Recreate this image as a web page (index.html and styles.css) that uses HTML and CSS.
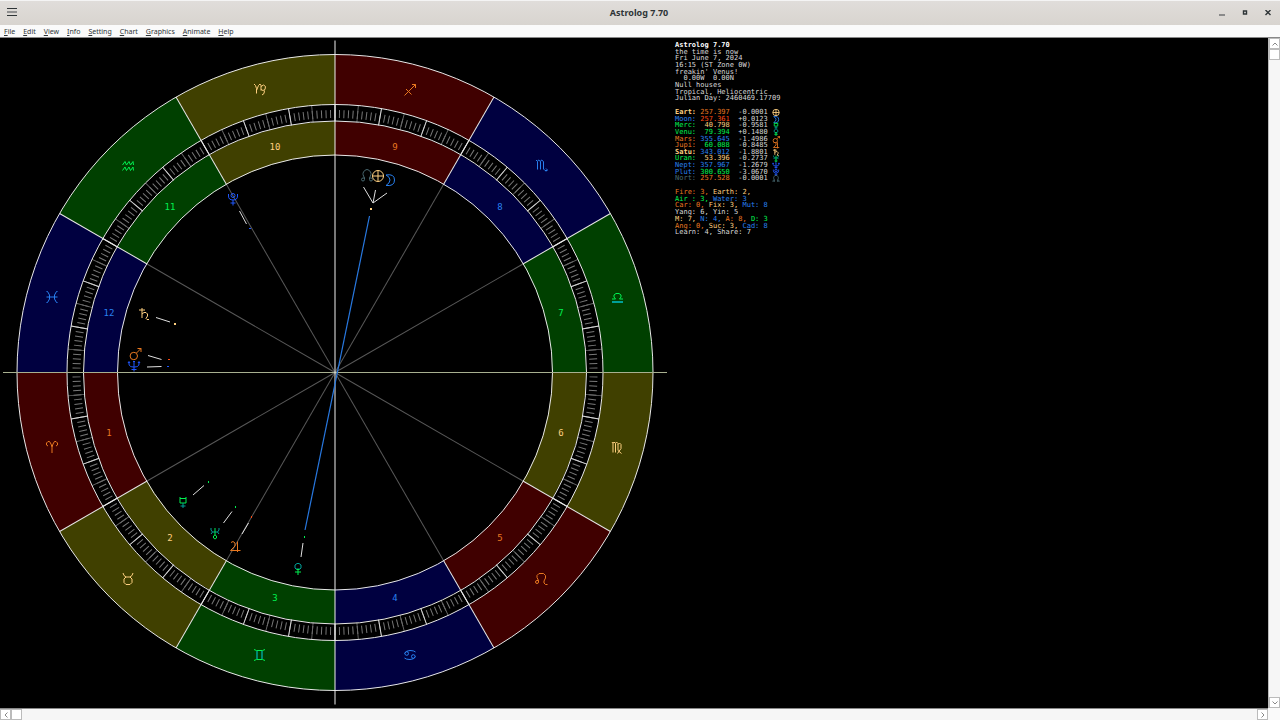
FILE: index.html
```
<!DOCTYPE html>
<html lang="en">
<head>
    <meta charset="utf-8">
    <title>Astrolog 7.70</title>
    <link rel="stylesheet" href="styles.css">
</head>
<body>
    <!-- Title bar -->
    <header class="titlebar">
        <button type="button" class="icon-button" aria-label="Window menu">
            <svg width="10" height="10" viewBox="0 0 10 10"><path d="M0 .5h10M0 7.500h10" stroke="#2e3436"/><path d="M0 4h10" stroke="#909090" stroke-width="2"/></svg>
        </button>
        <h1>Astrolog 7.70</h1>
        <div class="window-controls">
            <button type="button" class="icon-button" aria-label="Minimize">
                <svg width="6" height="6" viewBox="0 0 6 6"><path d="M0 5h6" stroke="#8a8a8a" stroke-width="2"/></svg>
            </button>
            <button type="button" class="icon-button" aria-label="Maximize">
                <svg width="6" height="6" viewBox="0 0 6 6"><path d="M1.5 1h3v3h-3z" fill="#ddd" stroke="#2e3436" stroke-width="1.4"/></svg>
            </button>
            <button type="button" class="icon-button" aria-label="Close">
                <svg width="6" height="6" viewBox="0 0 6 6"><path d="M.5 0l5 5M5.5 0l-5 5" stroke="#2e3436" stroke-width="1.4"/></svg>
            </button>
        </div>
    </header>

    <nav class="menubar">
        <button type="button"><u>F</u>ile</button>
        <button type="button"><u>E</u>dit</button>
        <button type="button"><u>V</u>iew</button>
        <button type="button"><u>I</u>nfo</button>
        <button type="button"><u>S</u>etting</button>
        <button type="button"><u>C</u>hart</button>
        <button type="button"><u>G</u>raphics</button>
        <button type="button"><u>A</u>nimate</button>
        <button type="button"><u>H</u>elp</button>
    </nav>

    <div class="workspace">
        <main class="canvas">
            <svg class="wheel" viewBox="0 38 670 670" role="img" aria-label="Chart wheel">
                <defs>
                    <path id="sector" d="M268 0H318A318 318 0 0 1 275.4 159L232.1 134A268 268 0 0 0 268 0ZM217 0H251A251 251 0 0 1 217.4 125.5L187.9 108.5A217 217 0 0 0 217 0Z"/>
                    <g id="cusp">
                        <path class="spoke" d="M0 0H217"/>
                        <path class="edge" d="M217 0H318"/>
                    </g>
                    <!-- Planet glyphs, also used in the table -->
                    <path id="earth" d="M5.5 0A5.5 5.5 0 1 1-5.5 0A5.5 5.5 0 1 1 5.5 0M-5.5 0H5.5M0-5.5V5.5"/>
                    <path id="moon" d="M-4-5Q4.500-6.500 4.500 0T-4 5.500Q0 3 0 0T-4-5Z"/>
                    <path id="node" d="M-2.5 4.5a1.5 1.5 0 1 1-1.5-1.5h1.5C-4 0-4.5-1-3.5-3Q-2-5.500 0-5.500T3.500-3C4.500-1 4 0 2.500 3H4a1.5 1.5 0 1 1-1.5 1.5V3M-2.500 3V4.500"/>
                    <g id="mercury"><path d="M-3-5v1.500h6V-5M-3-3.500V1H3v-4.500"/><path class="teal" d="M0 1v5M-2.500 4H2.500"/></g>
                    <g id="venus"><path class="teal" d="M-2 0L-3-1V-4L-1-5.500H1L3-4V-1L2 0Z"/><path d="M-1.500 .5h3M0 .5V6M-3 3H3"/></g>
                    <path id="mars" d="M2.500 2A3.700 3.700 0 1 1-4.900 2A3.700 3.700 0 1 1 2.500 2M1.500-1L6-5.500M2.500-5.500H6V-2"/>
                    <path id="jupiter" d="M-4-4.500L-2-5.500L0-4V-1L-4.500 3.500H5.500M2.500-5.500V5"/>
                    <path id="saturn" d="M-5-4H1M-2-6V4M-2 0L0-1.500H2L3.500 0V2L2 4.500L3 5.500H5"/>
                    <g id="uranus"><path class="teal" d="M-4-5V-3L-2.500-1L-4 1M4-5V-3L2.500-1L4 1M-2.500-1H2.500"/><path d="M0-5V2L-1.500 3V5L0 6L1.500 5V3L0 2"/></g>
                    <path id="neptune" d="M-5-4V-2Q-5 1 0 1T5-2V-4M0-5V5.500M-2.500 3.500H2.500M-6-3L-5-4.500L-4-3M4-3L5-4.500L6-3M-1-4L0-5L1-4"/>
                    <path id="pluto" d="M-4.500-5V-3Q-4.500 1 0 1T4.500-3V-5M2-3.500A2 2 0 1 1-2-3.500A2 2 0 1 1 2-3.500M0 1V6.500M-2.500 4H2.500"/>
                </defs>

                <g transform="translate(335 372.5)">
                    <use href="#sector" class="sector-earth"/>
                    <use href="#sector" class="sector-fire" transform="rotate(30)"/>
                    <use href="#sector" class="sector-water" transform="rotate(60)"/>
                    <use href="#sector" class="sector-air" transform="rotate(90)"/>
                    <use href="#sector" class="sector-earth" transform="rotate(120)"/>
                    <use href="#sector" class="sector-fire" transform="rotate(150)"/>
                    <use href="#sector" class="sector-water" transform="rotate(180)"/>
                    <use href="#sector" class="sector-air" transform="rotate(210)"/>
                    <use href="#sector" class="sector-earth" transform="rotate(240)"/>
                    <use href="#sector" class="sector-fire" transform="rotate(270)"/>
                    <use href="#sector" class="sector-water" transform="rotate(300)"/>
                    <use href="#sector" class="sector-air" transform="rotate(330)"/>

                    <!-- Degree ring: every 1, 5 and 10 degrees -->
                    <circle class="ticks-1" r="258.5" pathLength="360"/>
                    <circle class="ticks-5" r="259.5" pathLength="72"/>
                    <circle class="ticks-10" r="259.5" pathLength="36"/>

                    <use href="#cusp" transform="rotate(30)"/>
                    <use href="#cusp" transform="rotate(60)"/>
                    <use href="#cusp" transform="rotate(120)"/>
                    <use href="#cusp" transform="rotate(150)"/>
                    <use href="#cusp" transform="rotate(210)"/>
                    <use href="#cusp" transform="rotate(240)"/>
                    <use href="#cusp" transform="rotate(300)"/>
                    <use href="#cusp" transform="rotate(330)"/>

                    <circle class="edge" r="318"/>
                    <circle class="edge" r="268"/>
                    <circle class="edge" r="251.5"/>
                    <circle class="edge" r="217.5"/>
                    <path class="horizon" d="M-332 0H332"/>
                    <path class="meridian" d="M0-332V332"/>
                </g>

                <!-- House numbers -->
                <g class="houses">
                    <text class="fire" x="109" y="436">1</text>
                    <text class="earth" x="170" y="541">2</text>
                    <text class="air" x="275" y="601">3</text>
                    <text class="water" x="395" y="601">4</text>
                    <text class="fire" x="500" y="541">5</text>
                    <text class="earth" x="561" y="436">6</text>
                    <text class="air" x="561" y="316">7</text>
                    <text class="water" x="500" y="210">8</text>
                    <text class="fire" x="395" y="150">9</text>
                    <text class="earth" x="275" y="150">10</text>
                    <text class="air" x="170" y="210">11</text>
                    <text class="water" x="109" y="316">12</text>
                </g>

                <!-- Signs -->
                <g class="glyphs">
                    <path class="fire" transform="translate(52 447)" d="M-4-1L-5.500-2V-4L-4-5.500H-2.500L-1-3L0 0V6M0 0L1-3L2.500-5.500H4L5.500-4V-2L4-1"/>
                    <path class="earth" transform="translate(128 579)" d="M-5-6Q-4.500-3-2-2H2Q4.500-3 5-6M-2-2L-4 0V3.500L-2 5.500H2L4 3.500V0L2-2"/>
                    <g transform="translate(259.5 655)"><path class="teal" stroke-width="1.500" d="M-2.500-4V4M2.500-4V4"/><path class="air" d="M-5.500-5.500L-3-4.500H3L5.500-5.500M-5.500 5.500L-3 4.500H3L5.500 5.500"/></g>
                    <path class="water" transform="translate(410 655)" d="M-5.500-1.500Q-4-4.500 0-4.500T5.500-3M-1.500-1.500A1.800 1.800 0 1 1-5.100-1.500A1.800 1.800 0 1 1-1.500-1.500M5.100 1.500A1.800 1.800 0 1 1 1.500 1.500A1.800 1.800 0 1 1 5.100 1.500M5.500 1.500Q4 4.500 0 4.500T-5.500 3"/>
                    <path class="fire" transform="translate(541.5 579)" d="M-3 3A1.500 1.500 0 1 1-4.500 1.500H-3L-4.500-1.500V-3.500L-2.500-5.500H2L4-3.500V-1L2.500 2V4L4 5.500H6M-3 1.500V3"/>
                    <path class="earth" transform="translate(617 447.5)" d="M-5-5.500L-4-4V5M-4-4L-3-5.500L-1.500-4V5M-1.500-4L-.5-5.500L1-4V3L4.500 6M1-3L2.500-4.500L4-3V1L.5 6"/>
                    <g transform="translate(617.5 298)"><path class="air" d="M-5.500 1H-2L-3.500-1V-3L-1.500-4.500H1.500L3.500-3V-1L2 1H5.500"/><path class="teal" d="M-5.500 4H5.500" stroke-width="2"/></g>
                    <path class="water" transform="translate(541.5 165.5)" d="M-5.500-5.500L-4-4V4M-4-4L-3-5.500L-1-4V4M-1-4L0-5.500L2-4V3.500L3.500 5H5.500M4.500 3L6 4.500L4.500 6"/>
                    <path class="fire" transform="translate(410 90)" d="M-5.500 5.500L5.500-5.500M2-5.500H5.500V-2M-4-1L1.500 4.500"/>
                    <path class="earth" transform="translate(260 89.5)" d="M-6-5.500L-4.500-4L-3.500-1V4M-3.500 1L-1.500-4L0-5.500L1-4V1M1-3L3.500-4.500L5.500-3L5 0L3 1L1 0M4.500 1L4 4L2 5.500"/>
                    <g class="air" transform="translate(128 166)"><path d="M-5.500-1L-3-4.500L-1.500-1L1-4.500L2.500-1L5-4.500L5.500-1"/><path d="M-5.500 4.500L-3 1L-1.500 4.500L1 1L2.500 4.500L5 1L5.500 4.500"/></g>
                    <path class="water" transform="translate(52 297)" d="M-5.500-5.500H-4.500L-2.500-2V2L-4.500 5.500H-5.500M5.500-5.500H4.500L2.500-2V2L4.500 5.500H5.500M-5.500 0H5.500"/>
                </g>

                <!-- Aspect line -->
                <path class="aspect" d="M369.500 216L305 530"/>

                <!-- Planets -->
                <g class="glyphs">
                    <use href="#node" class="node" x="367" y="175"/>
                    <use href="#earth" class="earth" x="378" y="176"/>
                    <use href="#moon" class="water" x="390" y="180"/>
                    <use href="#pluto" class="pluto" x="233" y="199"/>
                    <use href="#saturn" class="earth" x="144" y="314"/>
                    <use href="#mars" class="fire" x="135" y="354"/>
                    <use href="#neptune" class="pluto" x="134" y="366"/>
                    <use href="#mercury" class="air" x="183" y="502"/>
                    <use href="#uranus" class="air" x="215" y="533"/>
                    <use href="#jupiter" class="fire" x="235" y="547"/>
                    <use href="#venus" class="air" x="298" y="569"/>
                </g>
                <path class="pointer" d="M363.5 187L373 203L375.500 190M373 203L387 193M239.500 211L246.500 224M156 317.500L170 322M148 355.500L161.500 359.500M147 367L161.500 366.500M193 495L204 485.500M223.500 523L232 511.500M242 534L248.500 523M301 557L303 543"/>
                <g class="dots">
                    <rect class="earth" x="370" y="208" width="2" height="2"/>
                    <rect class="pluto" x="249" y="228" width="2" height="1"/>
                    <rect class="earth" x="174" y="323" width="2" height="2"/>
                    <rect class="mars" x="168" y="359" width="2" height="1"/>
                    <rect class="pluto" x="167" y="366" width="2" height="1"/>
                    <rect class="air" x="208" y="481" width="1" height="2"/>
                    <rect class="air" x="235" y="506" width="1" height="2"/>
                    <rect class="mars" x="251" y="516" width="1" height="2"/>
                    <rect class="air" x="304" y="536" width="1" height="2"/>
                </g>
            </svg>

            <aside class="sidebar">
                <div class="lines chart-info">
                    <strong>Astrolog 7.70</strong>
                    <span>the time is now</span>
                    <span>Fri June 7, 2024</span>
                    <span>16:15 (ST Zone 0W)</span>
                    <span>freakin' Venus!</span>
                    <span>  0.00W  0.00N</span>
                    <span>Null houses</span>
                    <span>Tropical, Heliocentric</span>
                    <span>Julian Day: 2460469.17709</span>
                </div>

                <table class="positions">
                    <tbody>
                        <tr><th class="earth">Eart: </th><td class="fire">257.397</td><td>  -0.0001 </td><td><svg class="earth" viewBox="-6 -6 12 12"><use href="#earth"/></svg></td></tr>
                        <tr><th class="water">Moon: </th><td class="mars">257.361</td><td>  +0.0123 </td><td><svg class="water" viewBox="-6 -6 12 12"><use href="#moon"/></svg></td></tr>
                        <tr><th class="air">Merc: </th><td class="earth"> 40.798</td><td>  -0.9581 </td><td><svg class="air" viewBox="-6 -6 12 12"><use href="#mercury"/></svg></td></tr>
                        <tr><th class="air">Venu: </th><td class="air"> 79.394</td><td>  +0.1480 </td><td><svg class="air" viewBox="-6 -6 12 12"><use href="#venus"/></svg></td></tr>
                        <tr><th class="fire">Mars: </th><td class="water">355.645</td><td>  -1.4986 </td><td><svg class="fire" viewBox="-6 -6 12 12"><use href="#mars"/></svg></td></tr>
                        <tr><th class="fire">Jupi: </th><td class="air"> 60.088</td><td>  -0.8485 </td><td><svg class="fire" viewBox="-6 -6 12 12"><use href="#jupiter"/></svg></td></tr>
                        <tr><th class="earth">Satu: </th><td class="water">343.012</td><td>  -1.8801 </td><td><svg class="earth" viewBox="-6 -6 12 12"><use href="#saturn"/></svg></td></tr>
                        <tr><th class="air">Uran: </th><td class="earth"> 53.396</td><td>  -0.2737 </td><td><svg class="air" viewBox="-6 -6 12 12"><use href="#uranus"/></svg></td></tr>
                        <tr><th class="water">Nept: </th><td class="water">357.967</td><td>  -1.2679 </td><td><svg class="pluto" viewBox="-6 -6 12 12"><use href="#neptune"/></svg></td></tr>
                        <tr><th class="water">Plut: </th><td class="air">300.650</td><td>  -3.0670 </td><td><svg class="pluto" viewBox="-6 -6 12 12"><use href="#pluto"/></svg></td></tr>
                        <tr><th class="node">Nort: </th><td class="fire">257.528</td><td>  -0.0001 </td><td><svg class="node" viewBox="-6 -6 12 12"><use href="#node"/></svg></td></tr>
                    </tbody>
                </table>

                <div class="lines totals">
                    <span><span class="fire">Fire: 3,</span> <span class="earth">Earth: 2,</span></span>
                    <span><span class="air">Air : 3,</span> <span class="water">Water: 3</span></span>
                    <span><span class="fire">Car: 0,</span> <span class="earth">Fix: 3,</span> <span class="water">Mut: 8</span></span>
                    <span>Yang: 6, Yin: 5</span>
                    <span><span class="earth">M: 7,</span> <span class="water">N: 4,</span> <span class="fire">A: 8,</span> <span class="air">D: 3</span></span>
                    <span><span class="fire">Ang: 0,</span> <span class="earth">Suc: 3,</span> <span class="water">Cad: 8</span></span>
                    <span>Learn: 4, Share: 7</span>
                </div>
            </aside>
        </main>

        <!-- Scrollbars -->
        <div class="scrollbar vertical">
            <button type="button" aria-label="Scroll up"><svg width="6" height="4" viewBox="0 0 6 4"><path d="M.5 3.5L3 1L5.5 3.5"/></svg></button>
            <div class="thumb"></div>
            <button type="button" class="end" aria-label="Scroll down"><svg width="6" height="4" viewBox="0 0 6 4"><path d="M.5 .5L3 3L5.5 .5"/></svg></button>
        </div>
        <div class="scrollbar horizontal">
            <button type="button" aria-label="Scroll left"><svg width="4" height="6" viewBox="0 0 4 6"><path d="M3.5 .5L1 3L3.5 5.5"/></svg></button>
            <div class="thumb"></div>
            <button type="button" class="end" aria-label="Scroll right"><svg width="4" height="6" viewBox="0 0 4 6"><path d="M.5 .5L3 3L.5 5.5"/></svg></button>
        </div>
    </div>
</body>
</html>
```
FILE: styles.css
```
* {
    box-sizing: border-box;
}

body {
    margin: 0;
    height: 100vh;
    display: flex;
    flex-direction: column;
    overflow: hidden;
    background-color: #fafafa;
    font-family: "Noto Sans", sans-serif;
    color: #2e3436;
}

button {
    margin: 0;
    padding: 0;
    border: none;
    background: none;
    color: inherit;
    font: inherit;
}

svg {
    display: block;
}

/* Title bar */
.titlebar {
    display: grid;
    grid-template-columns: 1fr auto 1fr;
    align-items: center;
    height: 25px;
    padding: 0 9px 0 7px;
    border-top: 1px solid #f4f4f4;
    background: linear-gradient(#e0ddda, #d8d4cf);
}

.titlebar h1 {
    margin: 0;
    font-size: 9px;
    line-height: 12px;
}

.icon-button {
    justify-self: start;
}

.window-controls {
    display: flex;
    justify-content: flex-end;
    gap: 17px;
}

/* Menu bar */
.menubar {
    display: flex;
    gap: 8px;
    height: 13px;
    padding: 0 4px;
    border-bottom: 1px solid #888;
    font-size: 7px;
    line-height: 14px;
}

/* Chart area and its scrollbars */
.workspace {
    flex: 1;
    min-height: 0;
    display: grid;
    grid-template-columns: 1fr 12px;
    grid-template-rows: 1fr 12px;
}

.canvas {
    display: flex;
    min-height: 0;
    background-color: #000;
}

.wheel {
    flex: none;
    height: 100%;
    aspect-ratio: 1;
}

.scrollbar {
    display: flex;
    background-color: #f6f6f6;
}

.vertical {
    flex-direction: column;
    border-left: 1px solid #bbb;
}

.horizontal {
    border-top: 1px solid #888;
}

.scrollbar button,
.thumb {
    display: flex;
    align-items: center;
    justify-content: center;
    flex: 0 0 11px;
    border: 1px solid #bbb;
    background-color: #fff;
}

.scrollbar .end {
    margin-left: auto;
}

.vertical .end {
    margin-top: auto;
    margin-left: 0;
}

.scrollbar path {
    fill: none;
    stroke: #888;
}

/* Element colors */
.fire {
    color: #e87820;
}

.mars {
    color: #ff4810;
}

.earth {
    color: #ffd080;
}

.air {
    color: #00f050;
}

.teal {
    color: #00a098;
}

.water {
    color: #2880f0;
}

.pluto {
    color: #2058ff;
}

.node {
    color: #486870;
}

/* Wheel */
.sector-fire {
    fill: #400000;
}

.sector-earth {
    fill: #404000;
}

.sector-air {
    fill: #004000;
}

.sector-water {
    fill: #000040;
}

.edge {
    fill: none;
    stroke: #e8e8e8;
}

.spoke {
    stroke: #585858;
}

.horizon {
    stroke: #a8b090;
}

.meridian {
    stroke: #f0f0f0;
}

.ticks-1,
.ticks-5,
.ticks-10 {
    fill: none;
}

.ticks-1 {
    stroke: #787878;
    stroke-width: 8;
    stroke-dasharray: 0.22 0.78;
    stroke-dashoffset: 0.11;
}

.ticks-5 {
    stroke: #686868;
    stroke-width: 17;
    stroke-dasharray: 0.04 0.96;
    stroke-dashoffset: 0.02;
}

.ticks-10 {
    stroke: #d8d8d8;
    stroke-width: 17;
    stroke-dasharray: 0.02 0.98;
    stroke-dashoffset: 0.01;
}

.houses {
    font-family: "DejaVu Sans Mono", monospace;
    font-size: 9px;
    text-anchor: middle;
}

.houses text {
    fill: currentColor;
}

.glyphs path,
.positions path {
    fill: none;
    stroke: currentColor;
}

.glyphs,
.positions svg {
    fill: none;
    stroke: currentColor;
}

.glyphs use {
    stroke: currentColor;
}

.aspect {
    stroke: #2878e0;
    stroke-width: 1.2;
}

.pointer {
    fill: none;
    stroke: #e0e0e0;
}

.dots rect {
    fill: currentColor;
}

/* Sidebar text */
.sidebar {
    display: flex;
    flex-direction: column;
    gap: 7px;
    padding: 4px 5px;
    color: #d8d8d8;
    font-family: "DejaVu Sans Mono", monospace;
    font-size: 7px;
    line-height: 7px;
}

.lines,
.positions tbody {
    display: grid;
    grid-auto-rows: minmax(0, 1fr);
}

.lines > *,
.positions th,
.positions td {
    white-space: pre;
}

.chart-info {
    height: 60px;
}

.chart-info strong {
    color: #fff;
}

.positions {
    display: block;
}

.positions tbody {
    height: 73px;
}

.positions tr {
    display: flex;
    min-height: 0;
}

.positions th,
.positions td {
    padding: 0;
    font-weight: normal;
}

.positions th.earth {
    font-weight: bold;
}

.positions svg {
    width: 8px;
    height: 7px;
    stroke-width: 1.5;
}

.totals {
    height: 47px;
}
```
